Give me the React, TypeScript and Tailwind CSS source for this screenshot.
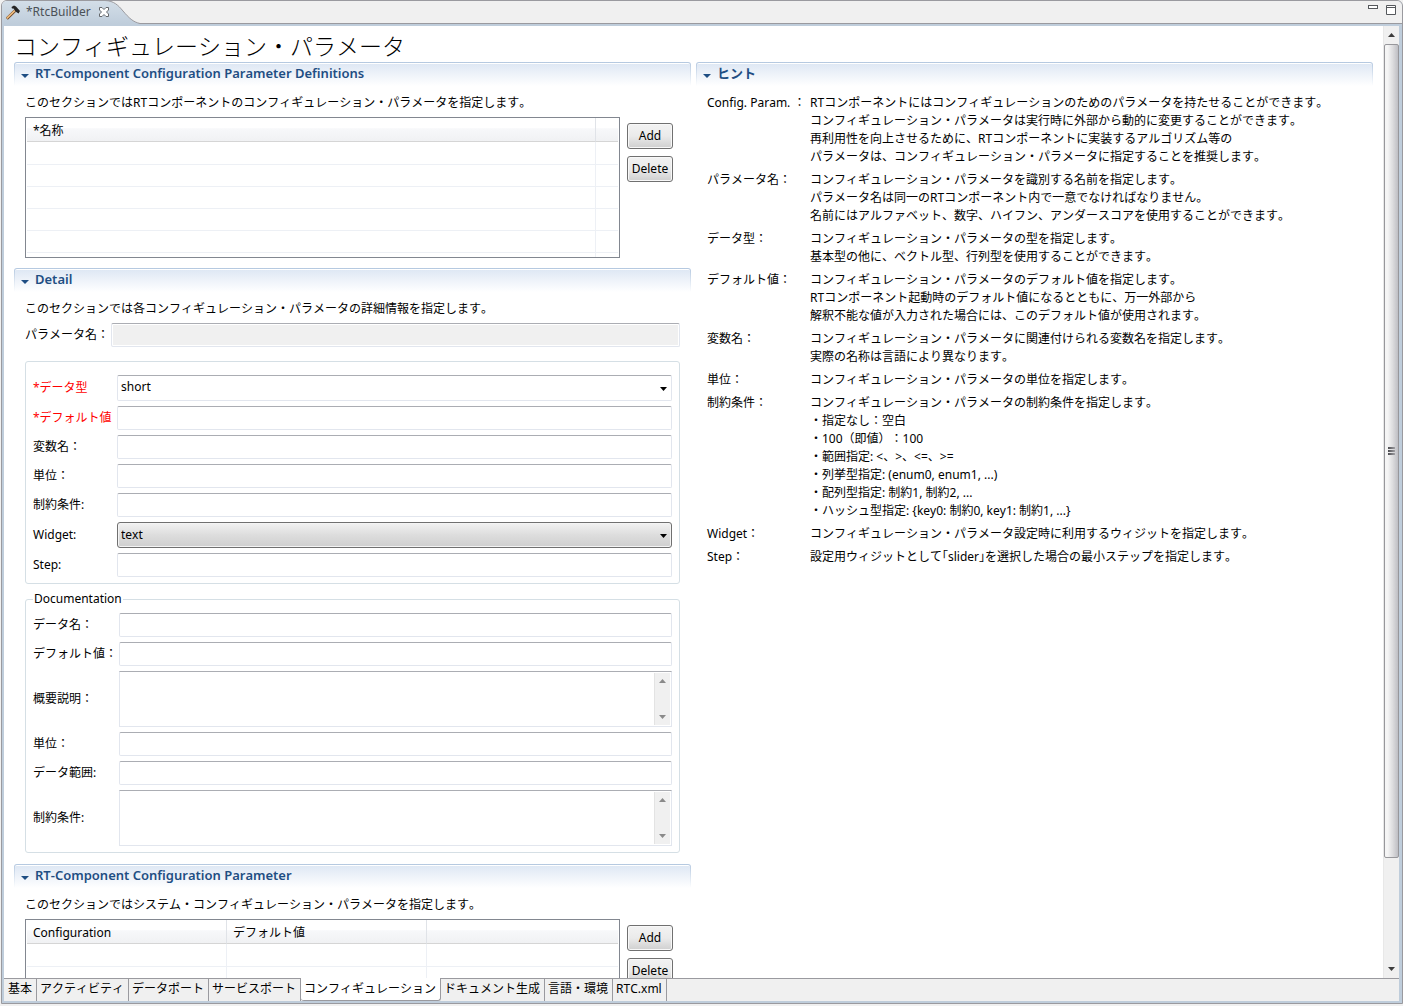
import React, { useId } from "react";

const hints: { term: string; lines: string[] }[] = [
  {
    term: "Config. Param. ：",
    lines: [
      "RTコンポーネントにはコンフィギュレーションのためのパラメータを持たせることができます。",
      "コンフィギュレーション・パラメータは実行時に外部から動的に変更することができます。",
      "再利用性を向上させるために、RTコンポーネントに実装するアルゴリズム等の",
      "パラメータは、コンフィギュレーション・パラメータに指定することを推奨します。",
    ],
  },
  {
    term: "パラメータ名：",
    lines: [
      "コンフィギュレーション・パラメータを識別する名前を指定します。",
      "パラメータ名は同一のRTコンポーネント内で一意でなければなりません。",
      "名前にはアルファベット、数字、ハイフン、アンダースコアを使用することができます。",
    ],
  },
  {
    term: "データ型：",
    lines: [
      "コンフィギュレーション・パラメータの型を指定します。",
      "基本型の他に、ベクトル型、行列型を使用することができます。",
    ],
  },
  {
    term: "デフォルト値：",
    lines: [
      "コンフィギュレーション・パラメータのデフォルト値を指定します。",
      "RTコンポーネント起動時のデフォルト値になるとともに、万一外部から",
      "解釈不能な値が入力された場合には、このデフォルト値が使用されます。",
    ],
  },
  {
    term: "変数名：",
    lines: [
      "コンフィギュレーション・パラメータに関連付けられる変数名を指定します。",
      "実際の名称は言語により異なります。",
    ],
  },
  { term: "単位：", lines: ["コンフィギュレーション・パラメータの単位を指定します。"] },
  {
    term: "制約条件：",
    lines: [
      "コンフィギュレーション・パラメータの制約条件を指定します。",
      "・指定なし：空白",
      "・100（即値）：100",
      "・範囲指定: <、>、<=、>=",
      "・列挙型指定: (enum0, enum1, ...)",
      "・配列型指定: 制約1, 制約2, ...",
      "・ハッシュ型指定: {key0: 制約0, key1: 制約1, ...}",
    ],
  },
  { term: "Widget：", lines: ["コンフィギュレーション・パラメータ設定時に利用するウィジットを指定します。"] },
  { term: "Step：", lines: ["設定用ウィジットとして｢slider｣を選択した場合の最小ステップを指定します。"] },
];

const pages = [
  "基本",
  "アクティビティ",
  "データポート",
  "サービスポート",
  "コンフィギュレーション",
  "ドキュメント生成",
  "言語・環境",
  "RTC.xml",
];
const activePage = "コンフィギュレーション";

const fieldBorder =
  "rounded-[2px] border border-[#e2e6ee] border-t-[#abadb3] bg-white px-1 outline-none";

function Triangle({ up = false, className = "" }: { up?: boolean; className?: string }) {
  return (
    <svg width="7" height="4" viewBox="0 0 7 4" className={className} aria-hidden="true">
      <path d={up ? "M0 4L3.5 0L7 4Z" : "M0 0H7L3.5 4Z"} fill="currentColor" />
    </svg>
  );
}

function Section({ title, children, className = "" }: { title: string; children: React.ReactNode; className?: string }) {
  return (
    <section className={className}>
      <div className="h-6 rounded-t-[3px] bg-linear-to-b from-[#b4c8e0] to-white px-px pt-px">
        <div className="h-full rounded-t-[2px] border-t border-white bg-linear-to-b from-[#dfe8f4] to-white">
          <h2 className="text-[13px] font-semibold text-[#1f4e83]">
            <button type="button" className="flex items-center gap-1.5 pl-1.5 leading-[18px]">
              <svg width="8" height="4" viewBox="0 0 8 4" aria-hidden="true" className="mt-1.5">
                <path d="M0 0H8L4 4Z" fill="currentColor" />
              </svg>
              {title}
            </button>
          </h2>
        </div>
      </div>
      <div className="px-[11px] pt-2">{children}</div>
    </section>
  );
}

function TextRow({ label, required = false }: { label: string; required?: boolean }) {
  const id = useId();
  return (
    <>
      <label htmlFor={id} className={required ? "whitespace-nowrap text-[#ff0000]" : "whitespace-nowrap"}>
        {label}
      </label>
      <input id={id} type="text" className={`${fieldBorder} h-6 w-full min-w-0`} />
    </>
  );
}

function SelectRow({
  label,
  options,
  required = false,
  raised = false,
}: {
  label: string;
  options: string[];
  required?: boolean;
  raised?: boolean;
}) {
  const id = useId();
  return (
    <>
      <label htmlFor={id} className={required ? "whitespace-nowrap text-[#ff0000]" : "whitespace-nowrap"}>
        {label}
      </label>
      <div className="relative">
        <select
          id={id}
          className={
            raised
              ? "block h-[26px] w-full appearance-none rounded-[3px] border border-[#707070] bg-linear-to-b from-[#f2f2f2] from-0% via-[#dddddd] via-50% to-[#cfcfcf] px-[3px] shadow-[inset_0_0_0_1px_#f4f4f4] outline-none"
              : "block h-[26px] w-full appearance-none rounded-[2px] border border-[#e2e6ee] border-t-[#abadb3] bg-white px-[3px] pb-0.5 outline-none"
          }
        >
          {options.map((o) => (
            <option key={o}>{o}</option>
          ))}
        </select>
        <Triangle className="pointer-events-none absolute top-3 right-[5px]" />
      </div>
    </>
  );
}

function AreaRow({ label }: { label: string }) {
  const id = useId();
  return (
    <>
      <label htmlFor={id} className="whitespace-nowrap">
        {label}
      </label>
      <div className="flex h-14 border border-[#e2e6ee] border-t-[#abadb3] bg-white">
        <textarea id={id} className="min-w-0 flex-1 resize-none px-1 outline-none" />
        <div className="m-px flex w-4 flex-col items-center justify-between border-l border-[#e3e3e3] bg-[#f0f0f0] pt-1.5 pb-1.5 text-[#8a8a8a]">
          <Triangle up />
          <Triangle />
        </div>
      </div>
    </>
  );
}

function PushButton({ children }: { children: React.ReactNode }) {
  return (
    <button
      type="button"
      className="h-[26px] rounded-[3px] border border-[#707070] bg-linear-to-b from-[#f2f2f2] from-0% via-[#ebebeb] via-50% to-[#cfcfcf] shadow-[inset_0_0_0_1px_#f8f8f8]"
    >
      {children}
    </button>
  );
}

function TableWithButtons({ heads, widths }: { heads: string[]; widths: string[] }) {
  return (
    <div className="mt-[5px] flex gap-[7px] pr-[7px]">
      <div className="h-[141px] min-w-0 flex-1 overflow-hidden border border-[#828790] px-px">
        <table className="w-full table-fixed border-separate border-spacing-0 text-left">
          <colgroup>
            {widths.map((w, i) => (
              <col key={i} className={w} />
            ))}
          </colgroup>
          <thead>
            <tr className="h-6 bg-linear-to-b from-white from-40% via-[#f7f8fa] via-45% to-[#f0f1f3]">
              {heads.map((h, i) => (
                <th
                  key={i}
                  scope="col"
                  className="border-r border-b border-[#e0e3e8] border-b-[#d5d5d5] pt-0.5 pl-1.5 font-normal last:border-r-0"
                >
                  {h}
                </th>
              ))}
            </tr>
          </thead>
          <tbody>
            {[0, 1, 2, 3, 4, 5].map((r) => (
              <tr key={r} className="h-[22px] first:h-[23px]">
                {heads.map((_, i) => (
                  <td key={i} className="border-r border-b border-[#edf0f5] last:border-r-0" />
                ))}
              </tr>
            ))}
          </tbody>
        </table>
      </div>
      <div className="flex w-[46px] flex-col gap-[7px] pt-1.5">
        <PushButton>Add</PushButton>
        <PushButton>Delete</PushButton>
      </div>
    </div>
  );
}

function EditorTab() {
  return (
    <header className="relative flex h-[23px] shrink-0 items-center border-b border-[#9a9a9f] bg-[#f0f0f0]">
      <svg width="142" height="23" viewBox="0 0 142 23" className="absolute top-0 left-0" aria-hidden="true">
        <defs>
          <linearGradient id="tab" x1="0" y1="0" x2="0" y2="1">
            <stop offset="0" stopColor="#d3dee8" />
            <stop offset="1" stopColor="#bfcddb" />
          </linearGradient>
        </defs>
        <path d="M0 0H103C112 0 116 4 121 10C127 17 131 21 138 22.5V23H0Z" fill="url(#tab)" />
        <path d="M103 -0.5C112 0 116 4 121 10C127 17 131 21 138 22.5" fill="none" stroke="#9a9a9f" />
      </svg>
      <div className="relative flex items-center pl-1 text-[#4b5157]">
        <svg width="14" height="15" viewBox="0 0 14 15" aria-hidden="true">
          <path d="M.8 13.8L9 5.8" stroke="#6b4423" strokeWidth="3" />
          <path d="M.8 13.4L9 5.4" stroke="#f0bd80" strokeWidth="1.6" />
          <path d="M5.5 2L8 .5L10 1.5L14 6L12.5 8.5L9.5 6.5L7.5 3.5L6 3.5Z" fill="#262626" />
        </svg>
        <span className="pl-1.5">*RtcBuilder</span>
        <button type="button" aria-label="閉じる" className="ml-2">
          <svg width="10" height="10" viewBox="0 0 10 10" aria-hidden="true">
            <path
              d="M.5.5H3L5 2.5L7 .5H9.5V3L7.5 5L9.5 7V9.5H7L5 7.5L3 9.5H.5V7L2.5 5L.5 3Z"
              fill="#fff"
              stroke="#65686c"
            />
          </svg>
        </button>
      </div>
      <div className="relative ml-auto flex gap-2 self-start pt-1 pr-1.5">
        <button type="button" aria-label="最小化" className="flex items-start">
          <svg width="10" height="10" viewBox="0 0 10 10" aria-hidden="true">
            <rect x=".5" y=".5" width="9" height="3" fill="#fff" stroke="#55585c" />
          </svg>
        </button>
        <button type="button" aria-label="最大化" className="flex items-start">
          <svg width="10" height="10" viewBox="0 0 10 10" aria-hidden="true">
            <path d="M.5.5H9.5V9.5H.5ZM.5 2.5H9.5" fill="#fff" stroke="#55585c" />
          </svg>
        </button>
      </div>
    </header>
  );
}

function ScrollBar() {
  return (
    <div className="flex w-4 shrink-0 flex-col items-center border-l border-[#e8e8e8] bg-[#f0f0f0]" aria-hidden="true">
      <div className="flex h-[18px] items-center text-[#3c3c3c]">
        <Triangle up />
      </div>
      <div className="flex w-full grow-[88] basis-0 flex-col items-center justify-center gap-px rounded-[2px] border border-[#97979b] bg-linear-to-r from-[#f5f5f5] from-20% via-[#dcdcde] via-60% to-[#bebec3]">
        <div className="h-0.5 w-[7px] bg-linear-to-r from-[#4c4c50] to-[#a0a0a4]" />
        <div className="h-0.5 w-[7px] bg-linear-to-r from-[#4c4c50] to-[#a0a0a4]" />
        <div className="h-0.5 w-[7px] bg-linear-to-r from-[#4c4c50] to-[#a0a0a4]" />
      </div>
      <div className="grow-[11] basis-0" />
      <div className="flex h-[18px] items-center text-[#3c3c3c]">
        <Triangle />
      </div>
    </div>
  );
}

export default function App() {
  const nameId = useId();
  return (
    <div className="h-screen bg-[#f0f0f0] pb-0.5 pl-px font-['Noto_Sans','Noto_Sans_CJK_JP',sans-serif] text-[12px] leading-[18px] text-black [font-kerning:none] [text-spacing-trim:space-all]">
      <div className="flex h-full flex-col overflow-hidden rounded-t-[6px] border border-[#9a9a9f] bg-[#bfcddb]">
        <EditorTab />
        <div className="flex min-h-0 flex-1 flex-col pt-0.5 pr-[3px] pb-0.5 pl-0.5">
          <div className="flex min-h-0 flex-1 bg-white">
            <main className="min-w-0 flex-1 overflow-hidden px-2.5">
              <h1 className="h-9 pt-1 text-[23px] leading-8 font-light">コンフィギュレーション・パラメータ</h1>
              <div className="grid grid-cols-2 items-start gap-[5px]">
                <div>
                  <Section title="RT-Component Configuration Parameter Definitions">
                    <p>このセクションではRTコンポーネントのコンフィギュレーション・パラメータを指定します。</p>
                    <TableWithButtons heads={["*名称", ""]} widths={["", "w-[22px]"]} />
                  </Section>

                  <Section title="Detail" className="mt-2.5">
                    <p>このセクションでは各コンフィギュレーション・パラメータの詳細情報を指定します。</p>
                    <div className="mt-[5px] flex items-center">
                      <label htmlFor={nameId} className="w-[86px] whitespace-nowrap">
                        パラメータ名：
                      </label>
                      <input
                        id={nameId}
                        type="text"
                        disabled
                        className="h-6 min-w-0 flex-1 rounded-[2px] border border-[#e2e6ee] border-t-[#abadb3] bg-[#f0f0f0] shadow-[inset_0_0_0_1px_#fff]"
                      />
                    </div>
                    <div className="mt-3.5 grid grid-cols-[84px_1fr] items-center gap-y-[5px] rounded-[3px] border border-[#d5dfe5] px-[7px] pt-[13px] pb-1.5">
                      <SelectRow label="*データ型" options={["short", "int", "long", "float", "double", "string"]} required />
                      <TextRow label="*デフォルト値" required />
                      <TextRow label="変数名：" />
                      <TextRow label="単位：" />
                      <TextRow label="制約条件:" />
                      <SelectRow label="Widget:" options={["text", "slider", "spin", "radio"]} raised />
                      <TextRow label="Step:" />
                    </div>
                    <fieldset className="mt-1.5 rounded-[3px] border border-[#d5dfe5] px-[7px] pb-1.5">
                      <legend className="px-px">Documentation</legend>
                      <div className="grid grid-cols-[86px_1fr] items-center gap-y-[5px] pt-[5px]">
                        <TextRow label="データ名：" />
                        <TextRow label="デフォルト値：" />
                        <AreaRow label="概要説明：" />
                        <TextRow label="単位：" />
                        <TextRow label="データ範囲:" />
                        <AreaRow label="制約条件:" />
                      </div>
                    </fieldset>
                  </Section>

                  <Section title="RT-Component Configuration Parameter" className="mt-[11px]">
                    <p>このセクションではシステム・コンフィギュレーション・パラメータを指定します。</p>
                    <TableWithButtons
                      heads={["Configuration", "デフォルト値", ""]}
                      widths={["w-[200px]", "w-[200px]", ""]}
                    />
                  </Section>
                </div>

                <Section title="ヒント">
                  <dl className="grid grid-cols-[103px_1fr] gap-y-[5px]">
                    {hints.map((h) => (
                      <React.Fragment key={h.term}>
                        <dt className="whitespace-nowrap">{h.term}</dt>
                        <dd>
                          {h.lines.map((l) => (
                            <p key={l}>{l}</p>
                          ))}
                        </dd>
                      </React.Fragment>
                    ))}
                  </dl>
                </Section>
              </div>
            </main>
            <ScrollBar />
          </div>
          <nav className="flex h-[23px] shrink-0 border-t border-[#9a9a9f] bg-[#f0f0f0] pl-px">
            {pages.map((p) => (
              <button
                key={p}
                type="button"
                aria-current={p === activePage ? "page" : undefined}
                className={
                  p === activePage
                    ? "-mt-px rounded-b-[3px] border-r border-b border-[#9a9a9f] bg-white pr-1 pl-[3px] whitespace-nowrap"
                    : "border-r border-[#9a9a9f] pr-1 pb-0.5 pl-[3px] whitespace-nowrap"
                }
              >
                {p}
              </button>
            ))}
          </nav>
        </div>
      </div>
    </div>
  );
}
